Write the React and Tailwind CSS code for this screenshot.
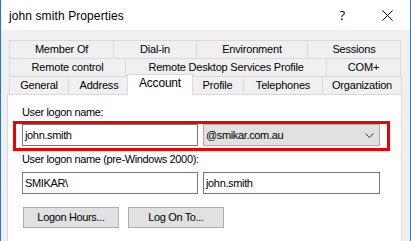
import React from "react";

const Tab = ({ w, children, last }) => (
  <div
    className={`h-[18px] shrink-0 border-l border-t border-[#d9d9d9] bg-[#f0f0f0] flex items-center justify-center tracking-[-0.2px] ${last ? "border-r" : ""}`}
    style={{ width: w }}
  >
    {children}
  </div>
);

export default function App() {
  return (
    <div
      className="w-[411px] h-[241px] overflow-hidden bg-[#f0f0f0] border-x border-[#1f7ad4] text-black"
      style={{ fontFamily: '"Liberation Sans", Arial, sans-serif' }}
    >
      {/* Title bar */}
      <div className="h-[30px] bg-white flex items-center pl-[8px] pt-[1px]">
        <span className="text-[12px] leading-none tracking-[0.1px]">
          john smith Properties
        </span>
        <span className="ml-auto text-[13px] leading-none mr-[37px]" style={{ fontFamily: '"Open Sans", sans-serif' }}>?</span>
        <svg width="11" height="11" viewBox="0 0 11 11" className="mr-[17px]">
          <path d="M0.5 0.5 L10.5 10.5 M10.5 0.5 L0.5 10.5" stroke="#000" strokeWidth="1" />
        </svg>
      </div>

      {/* Body */}
      <div className="pt-[10px] pl-[6px] text-[11px]">
        {/* Tab rows */}
        <div className="pl-[2px] flex flex-col">
          <div className="flex">
            <Tab w={104}>Member Of</Tab>
            <Tab w={83}>Dial-in</Tab>
            <Tab w={111}>Environment</Tab>
            <Tab w={94} last>Sessions</Tab>
          </div>
          <div className="flex">
            <Tab w={116}>Remote control</Tab>
            <Tab w={201}>Remote Desktop Services Profile</Tab>
            <Tab w={75} last>COM+</Tab>
          </div>
          <div className="flex items-start h-[18px]">
            <Tab w={59}>General</Tab>
            <Tab w={61}>Address</Tab>
            <div className="relative z-10 -mt-[2px] -mx-[2px] h-[21px] w-[66px] shrink-0 bg-white border-l border-t border-r border-[#d9d9d9] flex items-center justify-center pb-[4px] text-[12px] tracking-[-0.2px]">
              Account
            </div>
            <Tab w={52}>Profile</Tab>
            <Tab w={79}>Telephones</Tab>
            <Tab w={80} last>Organization</Tab>
          </div>
        </div>

        {/* Panel */}
        <div className="w-[395px] h-[160px] bg-white border border-[#d9d9d9] pl-[14px] pt-[12px] tracking-[-0.35px]">
          <div className="leading-none h-[11px]">User logon name:</div>
          <div className="-ml-[9px] mt-[3px] w-[377px] h-[30px] border-[3px] border-[#ee0000] pl-[6px] flex items-start gap-[5px]">
            <div className="w-[176px] h-[22px] border border-[#7a7a7a] bg-white flex items-center pl-[2px]">
              john.smith
            </div>
            <div className="w-[177px] h-[22px] border border-[#adadad] bg-[#e1e1e1] flex items-center pl-[2px]">
              <span>@smikar.com.au</span>
              <svg width="9" height="5" viewBox="0 0 9 5" className="ml-auto mr-[5px]">
                <path d="M0.5 0.5 L4.5 4.5 L8.5 0.5" stroke="#333" strokeWidth="1" fill="none" />
              </svg>
            </div>
          </div>
          <div className="mt-[3px] leading-none h-[11px]">User logon name (pre-Windows 2000):</div>
          <div className="mt-[7px] flex gap-[5px]">
            <div className="w-[176px] h-[22px] border border-[#7a7a7a] bg-white flex items-center pl-[2px]">
              SMIKAR\
            </div>
            <div className="w-[177px] h-[22px] border border-[#7a7a7a] bg-white flex items-center pl-[2px]">
              john.smith
            </div>
          </div>
          <div className="mt-[13px] flex gap-[9px] pl-[1px]">
            <div className="w-[96px] h-[21px] border border-[#adadad] bg-[#e1e1e1] flex items-center justify-center">
              Logon Hours...
            </div>
            <div className="w-[96px] h-[21px] border border-[#adadad] bg-[#e1e1e1] flex items-center justify-center">
              Log On To...
            </div>
          </div>
        </div>
      </div>
    </div>
  );
}
